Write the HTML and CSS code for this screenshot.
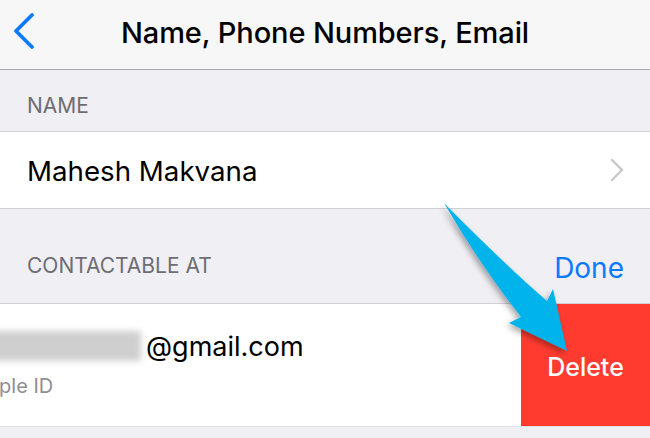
FILE: index.html
```html
<!DOCTYPE html>
<html lang="en">
<head>
    <meta charset="UTF-8">
    <meta name="viewport" content="width=device-width, initial-scale=1.0">
    <title>Name, Phone Numbers, Email</title>
    <link rel="stylesheet" href="styles.css">
</head>
<body>
    <div class="screen">
        <div class="navbar">
            <svg class="back" width="26" height="40" viewBox="0 0 26 40">
                <path d="M20 3 L4 19 L20 35" fill="none" stroke="#0a7aff" stroke-width="3.8" stroke-linecap="round" stroke-linejoin="round"/>
            </svg>
            <span class="title">Name, Phone Numbers, Email</span>
        </div>

        <div class="section-header header-name">
            <span>NAME</span>
        </div>
        <div class="row row-name">
            <span class="row-text">Mahesh Makvana</span>
            <svg class="chevron" width="14" height="24" viewBox="0 0 14 24">
                <path d="M2 2 L12 12 L2 22" fill="none" stroke="#c7c7cc" stroke-width="2.4" stroke-linecap="round" stroke-linejoin="round"/>
            </svg>
        </div>

        <div class="section-header header-contact">
            <span>CONTACTABLE AT</span>
            <span class="done">Done</span>
        </div>
        <div class="row row-email">
            <div class="email-content">
                <div class="email-line">
                    <span class="blurred"></span>
                    <span class="email-domain">@gmail.com</span>
                </div>
                <span class="email-sub">Apple ID</span>
            </div>
            <div class="delete">Delete</div>
        </div>

        <svg class="arrow" width="650" height="438" viewBox="0 0 650 438">
            <defs>
                <filter id="shadow" x="-20%" y="-20%" width="140%" height="140%">
                    <feDropShadow dx="-2" dy="3" stdDeviation="3" flood-color="#000" flood-opacity="0.35"/>
                </filter>
            </defs>
            <path d="M444 203 Q500 260 547 301 L553 289 L567 351 L509 323 L521 317 Q478 262 444 203 Z" fill="#00b3ea" filter="url(#shadow)"/>
        </svg>
    </div>
</body>
</html>
```

FILE: styles.css
```css
body {
    margin: 0;
    background-color: #efeff4;
    font-family: Inter, "Noto Sans", sans-serif;
}

.screen {
    position: relative;
    width: 650px;
    height: 438px;
    overflow: hidden;
    background-color: #efeff4;
}

.navbar {
    height: 69px;
    background-color: #f7f7f8;
    border-bottom: 1px solid #a9a9ad;
    display: flex;
    align-items: center;
    justify-content: center;
    position: relative;
}

.back {
    position: absolute;
    left: 12px;
    top: 12px;
}

.title {
    font-size: 29px;
    font-weight: 500;
    color: #000;
    letter-spacing: -0.1px;
    margin-top: -4px;
}

.section-header {
    display: flex;
    align-items: flex-end;
    justify-content: space-between;
    padding: 0 26px 0 27px;
    color: #6d6d72;
    font-size: 21px;
    box-sizing: border-box;
}

.header-name {
    height: 61px;
    padding-bottom: 13px;
}

.header-contact {
    height: 94px;
    padding-bottom: 25px;
}

.done {
    color: #0a7aff;
    font-size: 28px;
    margin-bottom: -7px;
}

.row {
    background-color: #fff;
    border-top: 1px solid #d0d0d4;
    border-bottom: 1px solid #d0d0d4;
    display: flex;
    align-items: center;
}

.row-name {
    height: 76px;
    padding: 0 27px;
    justify-content: space-between;
}

.row-text {
    font-size: 27.7px;
    color: #000;
    margin-top: 2px;
}

.chevron {
    margin-right: -1px;
}

.row-email {
    height: 122px;
    align-items: stretch;
    border-bottom-color: #e0e0e3;
}

.email-content {
    flex: 1;
    display: flex;
    flex-direction: column;
    justify-content: center;
    margin-left: -27px;
    padding-bottom: 4px;
}

.email-line {
    display: flex;
    align-items: center;
    height: 36px;
}

.blurred {
    display: block;
    width: 168px;
    height: 30px;
    background-color: #cfcfcf;
    filter: blur(3px);
    margin-right: 5px;
}

.email-domain {
    font-size: 27px;
    color: #000;
}

.email-sub {
    font-size: 20px;
    color: #8e8e93;
    margin-top: 10px;
}

.delete {
    width: 129px;
    background-color: #ff3b30;
    color: #fff;
    font-size: 25px;
    font-weight: 500;
    display: flex;
    align-items: center;
    justify-content: center;
    padding-top: 4px;
}

.arrow {
    position: absolute;
    left: 0;
    top: 0;
    pointer-events: none;
}
```
